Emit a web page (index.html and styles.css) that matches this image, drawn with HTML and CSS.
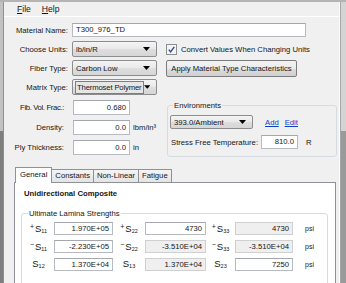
FILE: index.html
```html
<!DOCTYPE html>
<html lang="en">
<head>
    <meta charset="UTF-8">
    <title>Material Editor</title>
    <link rel="stylesheet" href="styles.css">
</head>
<body>
    <div class="window">
        <div class="frame-left"></div>
        <div class="content">
            <div class="menubar">
                <span class="menu"><u>F</u>ile</span>
                <span class="menu"><u>H</u>elp</span>
            </div>

            <div class="top-form">
                <div class="row">
                    <span class="lbl">Material Name:</span>
                    <div class="field wide">T300_976_TD</div>
                </div>
                <div class="row">
                    <span class="lbl">Choose Units:</span>
                    <div class="combo"><span class="combo-text">lb/in/R</span><svg class="arrow" width="7" height="4" viewBox="0 0 7 4"><path d="M0 0H7L3.5 4Z" fill="#000"/></svg></div>
                    <span class="check"><svg width="11" height="11" viewBox="0 0 11 11"><rect x="0.5" y="0.5" width="10" height="10" fill="#f4f4f4" stroke="#8e8f8f"/><path d="M2.8 5.6L4.6 7.8L8.3 2.8" fill="none" stroke="#2c4d9a" stroke-width="1.4"/></svg></span>
                    <span class="check-text">Convert Values When Changing Units</span>
                </div>
                <div class="row">
                    <span class="lbl">Fiber Type:</span>
                    <div class="combo"><span class="combo-text">Carbon Low</span><svg class="arrow" width="7" height="4" viewBox="0 0 7 4"><path d="M0 0H7L3.5 4Z" fill="#000"/></svg></div>
                    <div class="btn">Apply Material Type Characteristics</div>
                </div>
                <div class="row">
                    <span class="lbl">Matrix Type:</span>
                    <div class="combo focused"><span class="combo-text focus-box">Thermoset Polymer</span><svg class="arrow" width="7" height="4" viewBox="0 0 7 4"><path d="M0 0H7L3.5 4Z" fill="#000"/></svg></div>
                </div>
            </div>

            <div class="mid">
                <div class="props">
                    <div class="prow">
                        <span class="plbl fvf">Fib. Vol. Frac.:</span>
                        <div class="field num">0.680</div>
                    </div>
                    <div class="prow">
                        <span class="plbl">Density:</span>
                        <div class="field num">0.0</div>
                        <span class="unit">lbm/in&sup3;</span>
                    </div>
                    <div class="prow">
                        <span class="plbl">Ply Thickness:</span>
                        <div class="field num">0.0</div>
                        <span class="unit">in</span>
                    </div>
                </div>

                <fieldset class="group env">
                    <legend>Environments</legend>
                    <div class="env-row">
                        <div class="combo env-combo"><span class="combo-text">393.0/Ambient</span><svg class="arrow" width="7" height="4" viewBox="0 0 7 4"><path d="M0 0H7L3.5 4Z" fill="#000"/></svg></div>
                        <a class="link add">Add</a>
                        <a class="link">Edit</a>
                    </div>
                    <div class="env-row temp">
                        <span class="temp-lbl">Stress Free Temperature:</span>
                        <div class="field num temp-field">810.0</div>
                        <span class="unit">R</span>
                    </div>
                </fieldset>
            </div>

            <div class="tabs">
                <div class="tab active">General</div>
                <div class="tab">Constants</div>
                <div class="tab">Non-Linear</div>
                <div class="tab">Fatigue</div>
            </div>
            <div class="panel">
                <div class="panel-title">Unidirectional Composite</div>
                <fieldset class="group strengths">
                    <legend>Ultimate Lamina Strengths</legend>
                    <div class="sgrid">
                        <span class="sym"><span class="sign">+</span>S<span class="idx">11</span></span>
                        <div class="field num">1.970E+05</div>
                        <span class="sym"><span class="sign">+</span>S<span class="idx">22</span></span>
                        <div class="field num">4730</div>
                        <span class="sym"><span class="sign">+</span>S<span class="idx">33</span></span>
                        <div class="field num off">4730</div>
                        <span class="unit psi">psi</span>

                        <span class="sym"><span class="sign">&minus;</span>S<span class="idx">11</span></span>
                        <div class="field num">-2.230E+05</div>
                        <span class="sym"><span class="sign">&minus;</span>S<span class="idx">22</span></span>
                        <div class="field num off">-3.510E+04</div>
                        <span class="sym"><span class="sign">&minus;</span>S<span class="idx">33</span></span>
                        <div class="field num off">-3.510E+04</div>
                        <span class="unit psi">psi</span>

                        <span class="sym">S<span class="idx">12</span></span>
                        <div class="field num">1.370E+04</div>
                        <span class="sym">S<span class="idx">13</span></span>
                        <div class="field num off">1.370E+04</div>
                        <span class="sym">S<span class="idx">23</span></span>
                        <div class="field num">7250</div>
                        <span class="unit psi">psi</span>
                    </div>
                </fieldset>
            </div>
        </div>
        <div class="frame-right"></div>
    </div>
</body>
</html>
```

FILE: styles.css
```css
* {
    box-sizing: border-box;
}
body {
    margin: 0;
    font-family: "Liberation Sans", Arial, sans-serif;
    font-size: 7.7px;
    color: #151515;
    background: #f0f0f0;
}
.window {
    display: flex;
    width: 346px;
    height: 283px;
    overflow: hidden;
    border-top: 2px solid #b4b4b4;
}
.frame-left {
    width: 4px;
    flex-shrink: 0;
    background: linear-gradient(#c2c2c2 0 46%, #7e7e7e 46%);
    border-right: 1px solid #8f8f8f;
}
.frame-right {
    width: 6px;
    flex-shrink: 0;
    background: linear-gradient(#d4d4d4 0 46%, #9a9a9a 46%);
    border-left: 1px solid #a6a6a6;
}
.content {
    flex: 1;
    background: #f0f0f0;
    border-right: 1px solid #fcfcfc;
}

/* menu */
.menubar {
    display: flex;
    align-items: center;
    gap: 11px;
    height: 15px;
    padding-left: 13px;
    font-size: 8.6px;
    border-bottom: 1px solid #ffffff;
}

/* top rows */
.top-form {
    padding-top: 5px;
}
.row {
    display: flex;
    align-items: center;
    height: 16px;
    margin-bottom: 3px;
}
.lbl {
    width: 64px;
    margin-right: 4px;
    text-align: right;
    white-space: nowrap;
}
.field {
    height: 14px;
    line-height: 12px;
    padding: 0 3px;
    background: #fff;
    border: 1px solid #b7bac0;
    border-top-color: #a4a7ad;
    white-space: nowrap;
}
.field.wide {
    width: 234px;
}
.field.num {
    text-align: right;
}
.field.off {
    background: #efefef;
    border-color: #d0d0d0;
}
.combo {
    display: flex;
    align-items: center;
    justify-content: space-between;
    width: 85px;
    height: 16px;
    padding: 0 6px 0 3px;
    border: 1px solid #8c8d8f;
    border-radius: 2px;
    background: linear-gradient(#f4f4f4, #e9e9e9 50%, #dedede 50%, #d6d6d6);
    white-space: nowrap;
}
.combo-text {
    line-height: 11px;
}
.focus-box {
    margin-left: -1px;
    padding: 0 1px;
    border: 1px solid #7d7d7d;
    background: #e6e6e6;
    letter-spacing: -0.15px;
}
.check {
    display: flex;
    margin-left: 9px;
    margin-right: 4px;
}
.btn {
    width: 131px;
    height: 17px;
    margin-left: 9px;
    line-height: 15px;
    text-align: center;
    border: 1px solid #7c7c7c;
    border-radius: 2px;
    background: linear-gradient(#f3f3f3, #ebebeb 50%, #dddddd 50%, #cfcfcf);
    white-space: nowrap;
}

/* properties + environments */
.mid {
    display: flex;
    margin-top: 4px;
}
.props {
    width: 163px;
    display: flex;
    flex-direction: column;
    gap: 4px;
}
.prow {
    display: flex;
    align-items: center;
    height: 16px;
}
.plbl {
    width: 60px;
    margin-right: 9px;
    text-align: right;
    white-space: nowrap;
}
.plbl.fvf {
    letter-spacing: -0.35px;
}
.prow .field {
    width: 57px;
    height: 15px;
    line-height: 13px;
}
.unit {
    margin-left: 3px;
    white-space: nowrap;
}

.group {
    margin: 0;
    padding: 0;
    border: 1px solid #d5dbe0;
    border-radius: 3px;
}
.group legend {
    padding: 0 1px;
    margin-left: 3px;
    line-height: 9px;
}
.env {
    width: 170px;
    height: 56px;
    margin-top: 2px;
    padding: 5px 0 0 2px;
}
.env-row {
    display: flex;
    align-items: center;
    height: 14px;
}
.env-combo {
    width: 83px;
    height: 14px;
}
.link {
    color: #0b3fcc;
    text-decoration: underline;
    margin-left: 12px;
}
.link.add {
    margin-right: -6px;
}
.env-row.temp {
    margin-top: 6px;
}
.temp-lbl {
    width: 91px;
    padding-left: 1px;
    white-space: nowrap;
}
.temp-field {
    width: 37px;
}
.env-row .unit {
    margin-left: 8px;
}

/* tabs */
.tabs {
    display: flex;
    align-items: flex-end;
    height: 15px;
    margin-top: 10px;
    padding-left: 11px;
}
.tab {
    height: 13px;
    line-height: 11px;
    padding: 0 3px;
    margin-right: -1px;
    border: 1px solid #8e9198;
    border-bottom: none;
    background: linear-gradient(#f4f4f4, #e4e4e4);
    white-space: nowrap;
}
.tab.active {
    position: relative;
    height: 16px;
    margin-bottom: -1px;
    padding: 0 4px;
    line-height: 13px;
    background: #fff;
    z-index: 1;
}
.panel {
    width: 322px;
    height: 120px;
    margin-left: 10px;
    border: 1px solid #8e9198;
    background: #fff;
    padding: 6px 0 0 9px;
}
.panel-title {
    font-weight: bold;
    line-height: 10px;
}
.strengths {
    width: 307px;
    height: 80px;
    margin: 10px 0 0 -3px;
    padding: 4px 0 0 1px;
}
.strengths legend {
    margin-left: 5px;
}
.sgrid {
    display: grid;
    grid-template-columns: 31px 59px 32px 61px 29px 58px auto;
    grid-auto-rows: 13px;
    row-gap: 5px;
    align-items: center;
}
.sym {
    justify-self: center;
    font-size: 9.5px;
    line-height: 12px;
    white-space: nowrap;
}
.sym .sign {
    font-size: 7px;
    vertical-align: 3px;
    margin-right: 1px;
}
.sym .idx {
    font-size: 5.5px;
    vertical-align: -1px;
}
.sgrid .field {
    height: 13px;
    line-height: 11px;
}
.psi {
    margin-left: 12px;
    font-size: 7px;
}
```
